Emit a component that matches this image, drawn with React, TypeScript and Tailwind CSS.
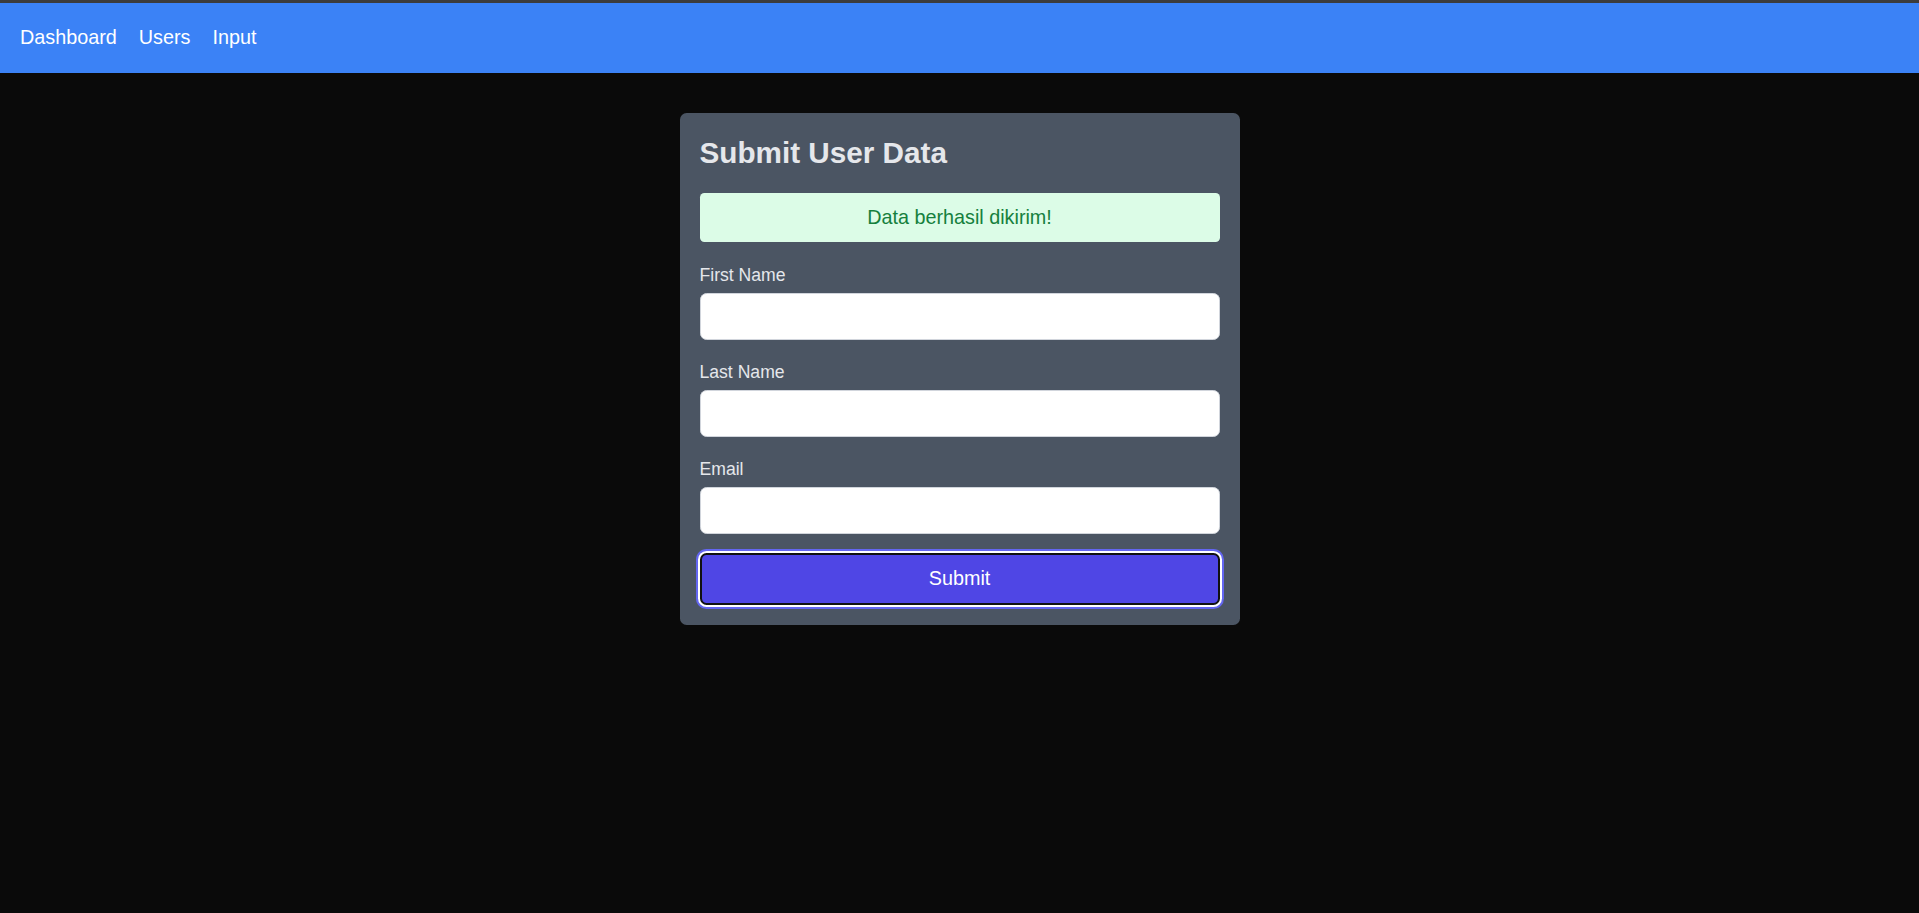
import { useState } from "react";

const links = ["Dashboard", "Users", "Input"];

function Field({ label, type = "text" }: { label: string; type?: string }) {
  return (
    <div className="flex flex-col">
      <label className="mb-[5px] text-[17.6px] leading-[26px] text-gray-200">
        {label}
      </label>
      <input
        type={type}
        className="h-[47px] w-full rounded-[6.6px] border border-gray-300 bg-white px-3 text-[17.6px] text-gray-900 outline-none"
      />
    </div>
  );
}

export default function App() {
  const [sent] = useState(true);

  return (
    <div className="flex min-h-[913px] flex-col bg-[#0a0a0a] font-['Liberation_Sans',Arial,sans-serif]">
      <div className="h-[3px] bg-[#3c3c3c]" />
      <nav className="flex h-[70px] items-center gap-[22px] bg-[#3b82f6] px-[20px]">
        {links.map((l) => (
          <a key={l} href="#" className="text-[19.8px] text-white">
            {l}
          </a>
        ))}
      </nav>

      <main className="flex justify-center pt-[40px]">
        <section className="w-[560px] rounded-[6.6px] bg-[#4b5563] p-5">
          <h1 className="mb-5 text-[29.7px] leading-[40px] font-bold text-gray-200">
            Submit User Data
          </h1>

          {sent && (
            <div className="mb-5 flex h-[49px] items-center justify-center rounded-[4.4px] bg-[#dcfce7] text-[19.8px] text-[#15803d]">
              Data berhasil dikirim!
            </div>
          )}

          <form className="flex flex-col gap-[19px]" onSubmit={(e) => e.preventDefault()}>
            <Field label="First Name" />
            <Field label="Last Name" />
            <Field label="Email" type="email" />
            <button
              type="submit"
              className="h-[52px] w-full rounded-[6.6px] border-2 border-[#111] bg-[#4f46e5] text-[19.8px] text-white shadow-[0_0_0_2px_#fff,0_0_0_4px_#6366f1]"
            >
              Submit
            </button>
          </form>
        </section>
      </main>
    </div>
  );
}
